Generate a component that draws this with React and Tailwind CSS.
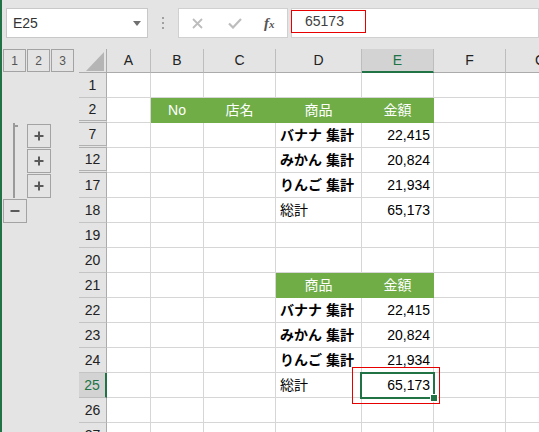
import React from "react";

const FONT = { fontFamily: '"Liberation Sans", "Noto Sans CJK JP", sans-serif' };

const COLS = [
  { k: "A", w: "w-[44px]" },
  { k: "B", w: "w-[53px]" },
  { k: "C", w: "w-[72px]" },
  { k: "D", w: "w-[86px]" },
  { k: "E", w: "w-[72px]" },
  { k: "F", w: "w-[72px]" },
];

const ROWS = [
  { n: 1 },
  { n: 2, hid: true, c: { B: { t: "No", g: 1 }, C: { t: "店名", g: 1 }, D: { t: "商品", g: 1 }, E: { t: "金額", g: 1 } } },
  { n: 7, hid: true, ol: "plus", top: true, c: { D: { t: "バナナ 集計", b: 1 }, E: { t: "22,415", r: 1 } } },
  { n: 12, hid: true, ol: "plus", c: { D: { t: "みかん 集計", b: 1 }, E: { t: "20,824", r: 1 } } },
  { n: 17, ol: "plus", c: { D: { t: "りんご 集計", b: 1 }, E: { t: "21,934", r: 1 } } },
  { n: 18, ol: "minus", c: { D: { t: "総計" }, E: { t: "65,173", r: 1 } } },
  { n: 19 },
  { n: 20 },
  { n: 21, c: { D: { t: "商品", g: 1 }, E: { t: "金額", g: 1 } } },
  { n: 22, c: { D: { t: "バナナ 集計", b: 1 }, E: { t: "22,415", r: 1 } } },
  { n: 23, c: { D: { t: "みかん 集計", b: 1 }, E: { t: "20,824", r: 1 } } },
  { n: 24, c: { D: { t: "りんご 集計", b: 1 }, E: { t: "21,934", r: 1 } } },
  { n: 25, sel: true, c: { D: { t: "総計" }, E: { t: "65,173", r: 1, sel: true } } },
  { n: 26 },
  { n: 27 },
];

function OutlineCell({ kind, top }) {
  return (
    <div className="w-[77px] h-[25px] shrink-0 flex">
      {kind === "plus" && (
        <div className="flex h-full">
          <div className="w-[11px]" />
          <div className="relative w-[2px] h-full bg-[#9a9a9a]">
            {top && <div className="absolute left-0 top-[2px] w-[5px] h-[2px] bg-[#9a9a9a]" />}
          </div>
          <div className="w-[12px]" />
          <div className="mt-[1px] w-[24px] h-[24px] border border-[#a3a3a3] flex items-center justify-center">
            <svg width="10" height="10" viewBox="0 0 10 10">
              <path d="M5 0.5V9.5M0.5 5H9.5" stroke="#5a5a5a" strokeWidth="2" />
            </svg>
          </div>
        </div>
      )}
      {kind === "minus" && (
        <div className="ml-[1px] mt-[1px] w-[24px] h-[24px] border border-[#a3a3a3] flex items-center justify-center">
          <svg width="10" height="10" viewBox="0 0 10 10">
            <path d="M0.5 5H9.5" stroke="#5a5a5a" strokeWidth="2" />
          </svg>
        </div>
      )}
    </div>
  );
}

function Cell({ col, data }) {
  const green = data && data.g;
  const base = `${col.w} h-[25px] shrink-0 border-r border-b relative flex items-center text-[14px] leading-none`;
  const colors = green
    ? "bg-[#70ad47] border-[#70ad47] text-white justify-center"
    : "bg-white border-[#d6d6d6] text-black";
  let align = "";
  if (data && !green) align = data.r ? "justify-end pr-[3px]" : "justify-start pl-[4px]";
  return (
    <div className={`${base} ${colors} ${align}`}>
      {data && <span className={data.b ? "font-bold" : ""}>{data.t}</span>}
      {data && data.sel && (
        <>
          <div className="absolute z-10 left-[-2px] top-[-1px] w-[75px] h-[27px] border-2 border-[#217346]" />
          <div className="absolute z-20 left-[68px] top-[21px] w-[8px] h-[8px] bg-[#217346] border border-white" />
          <div className="absolute z-10 left-[-10px] top-[-6px] w-[88px] h-[37px] border border-[#e60000]" />
        </>
      )}
    </div>
  );
}

export default function App() {
  return (
    <div className="w-[539px] h-[432px] overflow-hidden bg-[#e4e4e4] flex" style={FONT}>
      <div className="w-[2px] h-full bg-[#217346] shrink-0" />
      <div className="flex-1 flex flex-col min-w-0">
        {/* Formula bar */}
        <div className="h-[49px] shrink-0 flex items-start pt-[8px]">
          <div className="ml-[4px] w-[142px] h-[30px] bg-white border border-[#c8c8c8] flex items-center pl-[6px] pr-[6px] shrink-0">
            <span className="text-[14px] text-[#333]">E25</span>
            <div className="flex-1" />
            <svg width="8" height="5" viewBox="0 0 8 5">
              <path d="M0 0H8L4 5Z" fill="#707070" />
            </svg>
          </div>
          <div className="w-[30px] h-[30px] flex flex-col items-center justify-center gap-[3px] shrink-0">
            <div className="w-[2px] h-[2px] bg-[#a0a0a0]" />
            <div className="w-[2px] h-[2px] bg-[#a0a0a0]" />
            <div className="w-[2px] h-[2px] bg-[#a0a0a0]" />
          </div>
          <div className="w-[110px] h-[30px] bg-white border border-[#d0d0d0] flex items-center shrink-0">
            <svg className="ml-[13px]" width="11" height="11" viewBox="0 0 11 11">
              <path d="M1 1L10 10M10 1L1 10" stroke="#bdbdbd" strokeWidth="1.8" />
            </svg>
            <svg className="ml-[25px]" width="14" height="11" viewBox="0 0 14 11">
              <path d="M1 5.5L5 9.5L13 1" stroke="#bdbdbd" strokeWidth="2.2" fill="none" />
            </svg>
            <span
              className="ml-[22px] text-[15px] italic font-bold text-[#555]"
              style={{ fontFamily: '"Liberation Serif", serif' }}
            >
              f<span className="text-[11px]">x</span>
            </span>
          </div>
          <div className="ml-[3px] flex-1 h-[30px] bg-white border border-[#d0d0d0] relative flex items-center">
            <div className="ml-[-1px] mt-[-3px] w-[75px] h-[23px] border border-[#e60000] flex items-center pl-[13px]">
              <span className="text-[14px] text-[#404040]">65173</span>
            </div>
          </div>
        </div>

        {/* Column header row */}
        <div className="h-[24px] shrink-0 flex">
          <div className="w-[77px] shrink-0 flex gap-[1px] pl-[1px]">
            {["1", "2", "3"].map((l) => (
              <div
                key={l}
                className="w-[23px] h-[23px] border border-[#a3a3a3] flex items-center justify-center text-[12px] text-[#555]"
              >
                {l}
              </div>
            ))}
          </div>
          <div className="w-[28px] shrink-0 border-r border-b border-[#ababab] flex items-end justify-end pr-[2px] pb-[1px]">
            <svg width="18" height="19" viewBox="0 0 18 19">
              <path d="M18 0V19H0Z" fill="#b5b5b5" />
            </svg>
          </div>
          {COLS.map((c) => (
            <div
              key={c.k}
              className={`${c.w} shrink-0 border-r flex items-center justify-center text-[14px] ${
                c.k === "E"
                  ? "bg-[#d3d3d3] border-[#bdbdbd] border-b-2 border-b-[#217346] text-[#217346]"
                  : "border-[#bdbdbd] border-b border-b-[#ababab] text-[#222]"
              }`}
            >
              {c.k}
            </div>
          ))}
          <div className="flex-1 border-b border-[#ababab] flex items-center pl-[29px] text-[14px] text-[#222]">G</div>
        </div>

        {/* Rows */}
        {ROWS.map((r) => (
          <div key={r.n} className="h-[25px] shrink-0 flex">
            <OutlineCell kind={r.ol} top={r.top} />
            <div
              className={`w-[28px] h-[25px] shrink-0 border-r flex items-center justify-center text-[14px] ${
                r.sel
                  ? "bg-[#d3d3d3] border-r-2 border-r-[#217346] border-b border-b-[#bdbdbd] text-[#217346]"
                  : r.hid
                  ? "border-r-[#ababab] border-b-[3px] border-double border-b-[#b0b0b0] text-[#222]"
                  : "border-r-[#ababab] border-b border-b-[#c4c4c4] text-[#222]"
              }`}
            >
              {r.n}
            </div>
            {COLS.map((c) => (
              <Cell key={c.k} col={c} data={r.c && r.c[c.k]} />
            ))}
            <div className="flex-1 h-[25px] bg-white border-b border-[#d6d6d6]" />
          </div>
        ))}
      </div>
    </div>
  );
}
